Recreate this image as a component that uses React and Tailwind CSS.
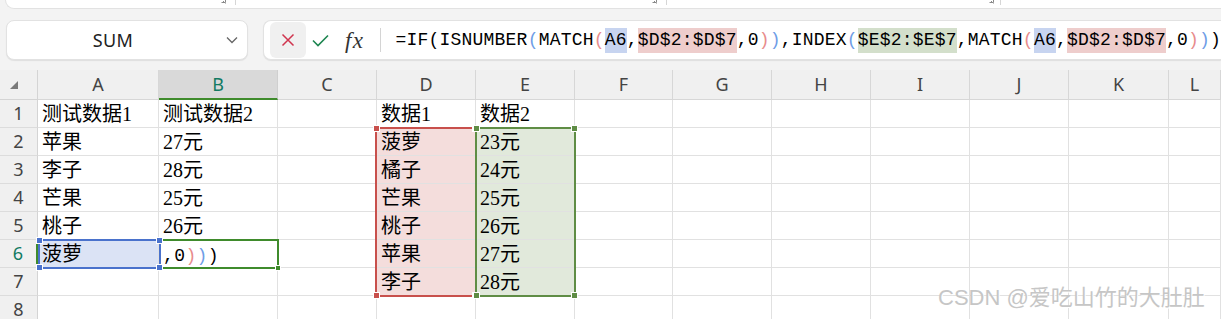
import React from 'react';

const GRID =
  'grid grid-cols-[38px_121px_119px_99px_99px_99px_98px_99px_99px_99px_99px_100px_52px]';
const COLS = ['A', 'B', 'C', 'D', 'E', 'F', 'G', 'H', 'I', 'J', 'K', 'L'];

const PAREN_K = 'text-black';
const PAREN_B = 'text-[#6f9de6]';
const PAREN_R = 'text-[#e88c8c]';
const HL_A = 'bg-[#c7d4f0]';
const HL_D = 'bg-[#eecdcc]';
const HL_E = 'bg-[#d3dfcb]';

const formula = [
  { t: '=IF' },
  { t: '(', c: PAREN_K },
  { t: 'ISNUMBER' },
  { t: '(', c: PAREN_B },
  { t: 'MATCH' },
  { t: '(', c: PAREN_R },
  { t: 'A6', c: HL_A },
  { t: ',' },
  { t: '$D$2:$D$7', c: HL_D },
  { t: ',0' },
  { t: ')', c: PAREN_R },
  { t: ')', c: PAREN_B },
  { t: ',INDEX' },
  { t: '(', c: PAREN_B },
  { t: '$E$2:$E$7', c: HL_E },
  { t: ',MATCH' },
  { t: '(', c: PAREN_R },
  { t: 'A6', c: HL_A },
  { t: ',' },
  { t: '$D$2:$D$7', c: HL_D },
  { t: ',0' },
  { t: ')', c: PAREN_R },
  { t: ')', c: PAREN_B },
  { t: ')', c: PAREN_K },
];

// what is being typed into B6
const tail = (
  <span className="font-['Liberation_Mono',monospace] text-[18px] tracking-[0.4px]">
    ,0<span className={PAREN_R}>)</span>
    <span className={PAREN_B}>)</span>
    <span className={PAREN_K}>)</span>
  </span>
);

const rows = [
  ['测试数据1', '测试数据2', '', '数据1', '数据2'],
  ['苹果', '27元', '', '菠萝', '23元'],
  ['李子', '28元', '', '橘子', '24元'],
  ['芒果', '25元', '', '芒果', '25元'],
  ['桃子', '26元', '', '桃子', '26元'],
  ['菠萝', tail, '', '苹果', '27元'],
  ['', '', '', '李子', '28元'],
  ['', '', '', '', ''],
];

const cellBg = (r, c) => {
  if (c === 3 && r >= 1 && r <= 6) return 'bg-[#f4dddc]';
  if (c === 4 && r >= 1 && r <= 6) return 'bg-[#e1e9db]';
  if (c === 0 && r === 5) return 'bg-[#dbe3f5]';
  return 'bg-white';
};

const Handle = ({ className }) => (
  <div className={`absolute w-[7px] h-[7px] border border-white ${className}`} />
);

const RibbonMark = () => (
  <svg width="6" height="6" viewBox="0 0 6 6" className="mt-[-1px]">
    <path d="M0.5 3.5h4v-3M2 2l2.5 2.5" stroke="#8a8a8a" strokeWidth="1" fill="none" />
  </svg>
);

export default function App() {
  return (
    <div className="relative w-[1221px] h-[319px] overflow-hidden bg-[#f3f3f3] font-['Noto_Sans',sans-serif]">
      {/* ribbon bottom edge */}
      <div className="h-[9px] ml-[5px] bg-white rounded-bl-[9px] border-b border-l border-[#e2e2e2] flex items-start">
        <div className="w-[215px]" />
        <RibbonMark />
        <div className="ml-[8px] w-px h-[5px] bg-[#d6d6d6]" />
        <div className="w-[416px]" />
        <RibbonMark />
        <div className="ml-[8px] w-px h-[5px] bg-[#d6d6d6]" />
        <div className="w-[322px]" />
        <RibbonMark />
        <div className="ml-[5px] w-px h-[5px] bg-[#d6d6d6]" />
      </div>

      {/* name box + formula bar */}
      <div className="mt-[11px] flex h-[40px]">
        <div className="ml-[6px] w-[242px] h-full bg-white rounded-lg border border-[#e2e2e2] shadow-[0_1px_1px_rgba(0,0,0,0.08)] flex items-center">
          <span className="w-[212px] text-center text-[18px] text-[#222] tracking-[0.3px]">SUM</span>
          <svg width="12" height="8" viewBox="0 0 12 8" className="ml-[7px]">
            <path d="M1 1.5l5 5 5-5" stroke="#666" strokeWidth="1.3" fill="none" />
          </svg>
        </div>

        <div className="ml-[15px] flex-1 h-full bg-white rounded-l-lg border border-r-0 border-[#e2e2e2] shadow-[0_1px_1px_rgba(0,0,0,0.08)] flex items-center pl-[6px]">
          <div className="w-[36px] h-[36px] rounded-md bg-[#f0f0f0] flex items-center justify-center">
            <svg width="14" height="14" viewBox="0 0 14 14">
              <path d="M1.5 1.5l11 11M12.5 1.5l-11 11" stroke="#d0344e" strokeWidth="1.5" fill="none" />
            </svg>
          </div>
          <svg width="17" height="13" viewBox="0 0 17 13" className="ml-[6px]">
            <path d="M1 6.5l5 5L16 1.5" stroke="#1e8651" strokeWidth="1.6" fill="none" />
          </svg>
          <span className="ml-[16px] text-[23px] italic font-['Liberation_Serif',serif] text-[#333] leading-none tracking-[1.5px]">
            fx
          </span>
          <div className="ml-[15px] w-px h-[24px] bg-[#d4d4d4]" />
          <div className="ml-[15px] flex items-center whitespace-nowrap font-['Liberation_Mono',monospace] text-[18px] tracking-[0.2px] text-black">
            {formula.map((tok, i) => (
              <span key={i} className={`inline-block h-[25px] leading-[25px] ${tok.c || ''}`}>
                {tok.t}
              </span>
            ))}
          </div>
        </div>
      </div>

      {/* sheet */}
      <div className="relative mt-[10px]">
        <div className={`${GRID} h-[30px] bg-[#f0f0f0]`}>
          <div className="border-r border-b border-[#d4d4d4] flex items-end pl-[10px] pb-[10px]">
            <svg width="8" height="8" viewBox="0 0 8 8">
              <path d="M8 0v8H0z" fill="#7a7a7a" />
            </svg>
          </div>
          {COLS.map((c) =>
            c === 'B' ? (
              <div
                key={c}
                className="bg-[#d9d9d9] border-r border-[#cfcfcf] border-b-2 border-b-[#3f8b2c] flex items-center justify-center text-[18px] text-[#127a62]"
              >
                {c}
              </div>
            ) : (
              <div
                key={c}
                className="border-r border-b border-[#d7d7d7] flex items-center justify-center text-[18px] text-[#444]"
              >
                {c}
              </div>
            )
          )}
        </div>

        {rows.map((row, r) => (
          <div key={r} className={`${GRID} h-[28px]`}>
            <div
              className={`bg-[#f0f0f0] border-b border-[#dcdcdc] flex items-center justify-center text-[18px] ${
                r === 5 ? 'border-r-2 border-r-[#3f8b2c] text-[#127a62]' : 'border-r border-r-[#d4d4d4] text-[#444]'
              }`}
            >
              {r + 1}
            </div>
            {COLS.map((c, ci) => (
              <div
                key={c}
                className={`${cellBg(r, ci)} border-r border-b border-[#e1e1e1] pl-[4px] text-[20px] leading-[28px] text-black whitespace-nowrap overflow-hidden font-['Liberation_Serif','Noto_Sans_CJK_SC',serif]`}
              >
                {row[ci] || ''}
              </div>
            ))}
          </div>
        ))}

        {/* D2:D7 reference range */}
        <div className="absolute left-[375px] top-[57px] w-[102px] h-[170px] border-2 border-[#c8504c]">
          <Handle className="left-[-4px] top-[-4px] bg-[#c8504c]" />
          <Handle className="right-[-4px] top-[-4px] bg-[#c8504c]" />
          <Handle className="left-[-4px] bottom-[-4px] bg-[#c8504c]" />
          <Handle className="right-[-4px] bottom-[-4px] bg-[#c8504c]" />
        </div>
        {/* E2:E7 reference range */}
        <div className="absolute left-[475px] top-[57px] w-[101px] h-[170px] border-2 border-[#5f8d45]">
          <Handle className="left-[-4px] top-[-4px] bg-[#5f8d45]" />
          <Handle className="right-[-4px] top-[-4px] bg-[#5f8d45]" />
          <Handle className="left-[-4px] bottom-[-4px] bg-[#5f8d45]" />
          <Handle className="right-[-4px] bottom-[-4px] bg-[#5f8d45]" />
        </div>
        {/* active cell B6 */}
        <div className="absolute left-[159px] top-[169px] w-[120px] h-[30px] border-2 border-[#3f8b2c]">
          <div className="absolute right-[-4px] bottom-[-4px] w-[6px] h-[6px] bg-[#3f8b2c] border border-white" />
        </div>
        {/* A6 reference */}
        <div className="absolute left-[38px] top-[169px] w-[123px] h-[30px] border-2 border-[#4a72cc]">
          <Handle className="left-[-4px] top-[-4px] bg-[#4a72cc]" />
          <Handle className="right-[-4px] top-[-4px] bg-[#4a72cc]" />
          <Handle className="left-[-4px] bottom-[-4px] bg-[#4a72cc]" />
          <Handle className="right-[-4px] bottom-[-4px] bg-[#4a72cc]" />
        </div>
      </div>

      {/* watermark */}
      <div className="absolute left-[938px] top-[286px] text-[22px] leading-[24px] text-[#c6c6c6] font-['Liberation_Sans','Noto_Sans_CJK_SC',sans-serif] [text-shadow:1px_1px_0_#ffffff] whitespace-nowrap">
        CSDN @爱吃山竹的大肚肚
      </div>
    </div>
  );
}
